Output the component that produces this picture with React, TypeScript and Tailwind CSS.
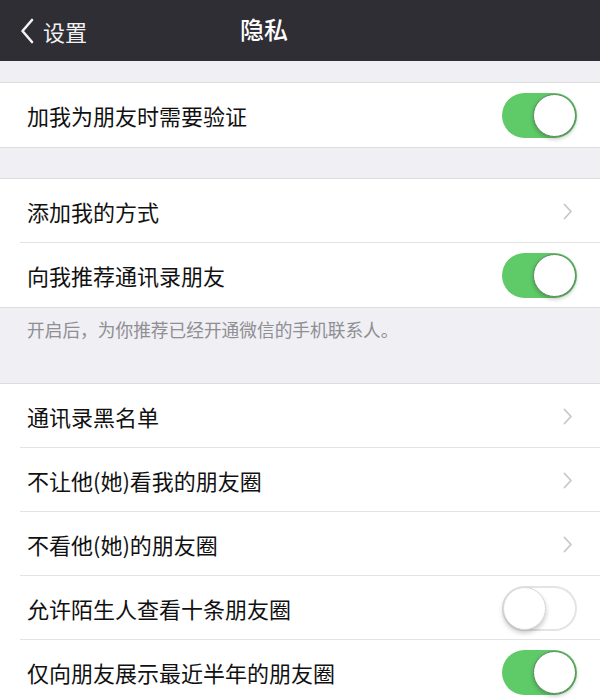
import React from "react";

const font = { fontFamily: '"Noto Sans CJK SC", "Noto Sans", sans-serif' };

function Toggle({ on }: { on: boolean }) {
  return on ? (
    <div className="relative h-[45px] w-[75px] rounded-full bg-[#5fcb68] shrink-0">
      <div className="absolute right-[1px] top-[1px] h-[43px] w-[43px] rounded-full bg-white border border-[#5a8a5e] shadow-[0_2px_4px_rgba(0,0,0,0.25)]" />
    </div>
  ) : (
    <div className="relative h-[45px] w-[75px] rounded-full bg-white border-2 border-[#e4e4e6] shrink-0">
      <div className="absolute left-[-1px] top-[-1px] h-[43px] w-[43px] rounded-full bg-white border border-[#d8d8da] shadow-[0_3px_5px_rgba(0,0,0,0.22)]" />
    </div>
  );
}

function Chevron() {
  return (
    <svg width="10" height="17" viewBox="0 0 10 17" className="mr-[4px]">
      <path d="M1.5 1.5 L8 8.5 L1.5 15.5" fill="none" stroke="#c7c7cc" strokeWidth="1.8" strokeLinecap="round" strokeLinejoin="round" />
    </svg>
  );
}

function Row({ label, right, divider }: { label: string; right: React.ReactNode; divider?: boolean }) {
  return (
    <div className="relative flex h-[64px] items-center justify-between bg-white pl-[27px] pr-[23px]">
      <span className="text-[22px] text-[#111] leading-none">{label}</span>
      {right}
      {divider && <div className="absolute bottom-0 left-[20px] right-0 h-px bg-[#e3e3e6]" />}
    </div>
  );
}

export default function App() {
  return (
    <div className="w-[600px] h-[699px] overflow-hidden bg-[#efeff4]" style={font}>
      <div className="relative flex h-[61px] items-center bg-[#2f2e34]">
        <div className="flex items-center pl-[20px]">
          <svg width="14" height="26" viewBox="0 0 14 26">
            <path d="M12 2 L2.5 13 L12 24" fill="none" stroke="#f4f4f4" strokeWidth="2.6" strokeLinecap="round" strokeLinejoin="round" />
          </svg>
          <span className="ml-[9px] text-[22px] text-[#f2f2f2] leading-none">设置</span>
        </div>
        <span className="absolute left-[240px] top-[17px] text-[24px] font-medium text-white leading-none">隐私</span>
      </div>

      <div className="h-[21px]" />
      <div className="border-y border-[#dcdcdf]">
        <Row label="加我为朋友时需要验证" right={<Toggle on />} />
      </div>

      <div className="h-[30px]" />
      <div className="border-y border-[#dcdcdf]">
        <Row label="添加我的方式" right={<Chevron />} divider />
        <Row label="向我推荐通讯录朋友" right={<Toggle on />} />
      </div>
      <div className="h-[75px] pl-[27px] pt-[10px]">
        <span className="text-[17.7px] text-[#8e8e93] leading-none">开启后，为你推荐已经开通微信的手机联系人。</span>
      </div>

      <div className="border-t border-[#dcdcdf]">
        <Row label="通讯录黑名单" right={<Chevron />} divider />
        <Row label="不让他(她)看我的朋友圈" right={<Chevron />} divider />
        <Row label="不看他(她)的朋友圈" right={<Chevron />} divider />
        <Row label="允许陌生人查看十条朋友圈" right={<Toggle on={false} />} divider />
        <Row label="仅向朋友展示最近半年的朋友圈" right={<Toggle on />} />
      </div>
    </div>
  );
}
